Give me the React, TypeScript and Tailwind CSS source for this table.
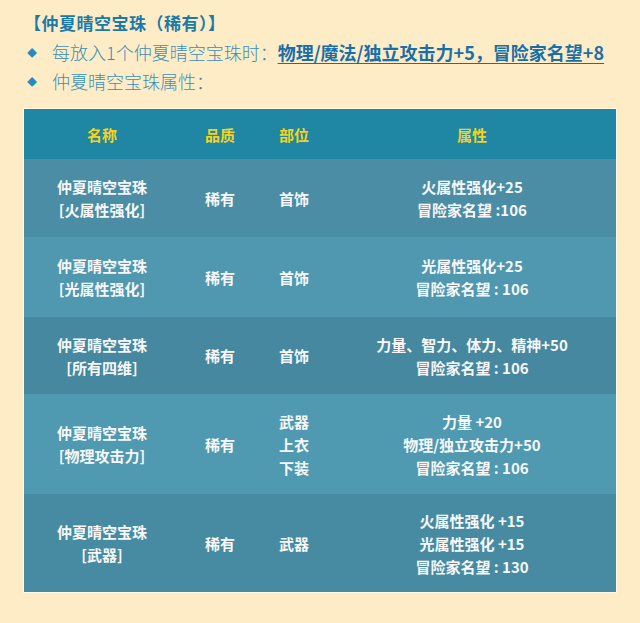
const rows = [
  { name: '[火属性强化]', slot: ['首饰'], attrs: ['火属性强化+25', '冒险家名望 :106'], h: 'h-[78px]', bg: 'bg-[#4a8da5]' },
  { name: '[光属性强化]', slot: ['首饰'], attrs: ['光属性强化+25', '冒险家名望 : 106'], h: 'h-[80px]', bg: 'bg-[#4f98b0]' },
  { name: '[所有四维]', slot: ['首饰'], attrs: ['力量、智力、体力、精神+50', '冒险家名望 : 106'], h: 'h-[77px]', bg: 'bg-[#45889f]' },
  { name: '[物理攻击力]', slot: ['武器', '上衣', '下装'], attrs: ['力量 +20', '物理/独立攻击力+50', '冒险家名望 : 106'], h: 'h-[100px]', bg: 'bg-[#4f99b1]' },
  { name: '[武器]', slot: ['武器'], attrs: ['火属性强化 +15', '光属性强化 +15', '冒险家名望 : 130'], h: 'h-[98px]', bg: 'bg-[#478ba3]' },
];

export default function App() {
  return (
    <div className="w-[640px] h-[623px] bg-[#fdecc6] overflow-hidden font-['Noto_Sans_CJK_SC',sans-serif]">
      <div className="pt-[11px] pl-[24px] text-[17px] leading-[24px] font-bold text-[#1b7aa8] tracking-[0.5px]">
        【仲夏晴空宝珠（稀有）】
      </div>
      <div className="mt-[2px] flex items-center pl-[27px] h-[30px] text-[18px] text-[#3b8fb6]">
        <span className="text-[10px] text-[#2a8ac0] w-[25px]">◆</span>
        <span className="font-light">每放入1个仲夏晴空宝珠时：</span>
        <span className="font-bold text-[#1a6fa8] underline underline-offset-[3px]">物理/魔法/独立攻击力+5，冒险家名望+8</span>
      </div>
      <div className="flex items-center pl-[27px] h-[28px] text-[18px] text-[#3b8fb6]">
        <span className="text-[10px] text-[#2a8ac0] w-[25px]">◆</span>
        <span className="font-light">仲夏晴空宝珠属性：</span>
      </div>
      <div className="ml-[23px] mt-[13px] w-[594px] border border-[#fff8e2] text-[15px] leading-[23px] font-bold">
        <div className="flex h-[50px] bg-[#1f86a3] text-[#f3d321]">
          <div className="w-[156px] flex items-center justify-center">名称</div>
          <div className="w-[80px] flex items-center justify-center">品质</div>
          <div className="w-[68px] flex items-center justify-center">部位</div>
          <div className="flex-1 flex items-center justify-center">属性</div>
        </div>
        {rows.map((r, i) => (
          <div key={i} className={`flex ${r.h} ${r.bg} text-[#f7f7f7]`}>
            <div className="w-[156px] flex flex-col items-center justify-center">
              <div>仲夏晴空宝珠</div>
              <div>{r.name}</div>
            </div>
            <div className="w-[80px] flex items-center justify-center">稀有</div>
            <div className="w-[68px] flex flex-col items-center justify-center">
              {r.slot.map((s) => (
                <div key={s}>{s}</div>
              ))}
            </div>
            <div className="flex-1 flex flex-col items-center justify-center">
              {r.attrs.map((a) => (
                <div key={a}>{a}</div>
              ))}
            </div>
          </div>
        ))}
      </div>
    </div>
  );
}
